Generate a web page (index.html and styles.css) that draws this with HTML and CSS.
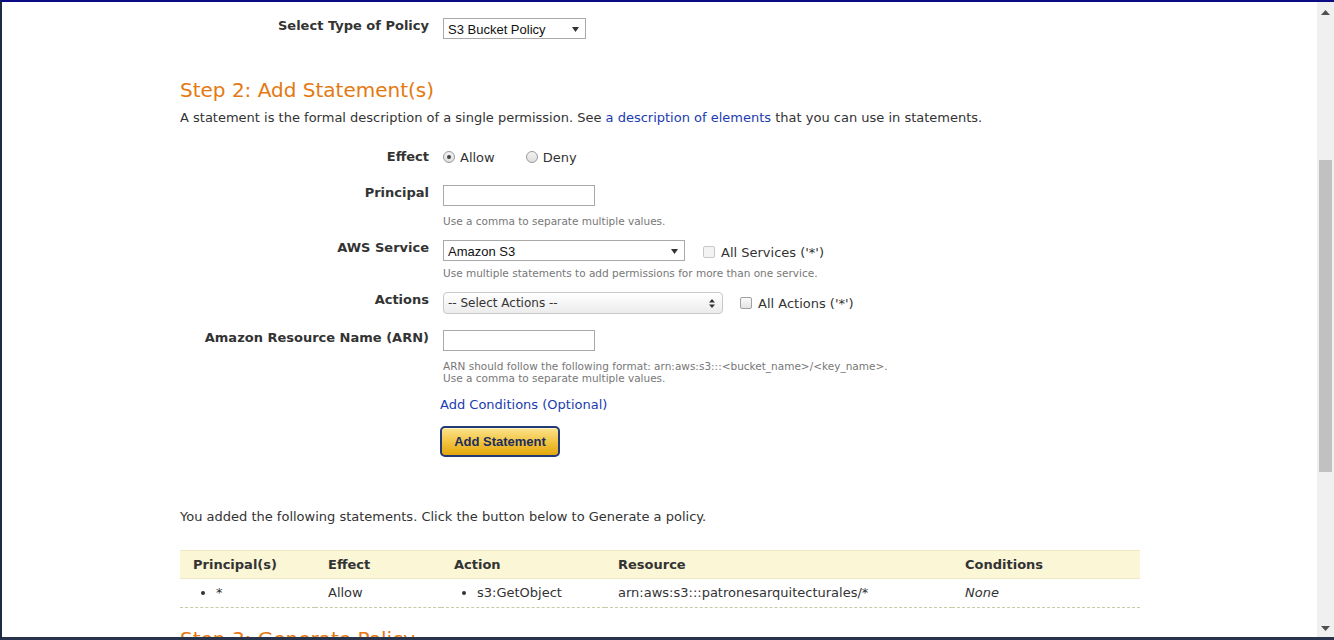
FILE: index.html
```html
<!DOCTYPE html>
<html lang="en">
<head>
<meta charset="utf-8">
<title>AWS Policy Generator</title>
<link rel="stylesheet" href="styles.css">
</head>
<body>
<div class="window">
  <div class="viewport">
    <div class="page">
      <div class="row row-type">
        <div class="label">Select Type of Policy</div>
        <div class="field">
          <div class="select select-type">
            <span>S3 Bucket Policy</span>
            <svg class="arrow" width="7" height="5" viewBox="0 0 7 5"><path d="M0 0H7L3.5 5Z" fill="#333"/></svg>
          </div>
        </div>
      </div>

      <h2 class="step step2">Step 2: Add Statement(s)</h2>
      <p class="intro">A statement is the formal description of a single permission. See <a href="#">a description of elements</a> that you can use in statements.</p>

      <div class="row row-effect">
        <div class="label">Effect</div>
        <div class="field radios">
          <label class="opt"><span class="radio checked"></span>Allow</label>
          <label class="opt opt-deny"><span class="radio"></span>Deny</label>
        </div>
      </div>

      <div class="row row-principal">
        <div class="label">Principal</div>
        <div class="field">
          <div class="input"></div>
          <div class="help help-principal">Use a comma to separate multiple values.</div>
        </div>
      </div>

      <div class="row row-service">
        <div class="label">AWS Service</div>
        <div class="field">
          <div class="inline">
            <div class="select select-service">
              <span>Amazon S3</span>
              <svg class="arrow" width="7" height="5" viewBox="0 0 7 5"><path d="M0 0H7L3.5 5Z" fill="#333"/></svg>
            </div>
            <label class="check check-disabled"><span class="box"></span>All Services ('*')</label>
          </div>
          <div class="help help-service">Use multiple statements to add permissions for more than one service.</div>
        </div>
      </div>

      <div class="row row-actions">
        <div class="label">Actions</div>
        <div class="field">
          <div class="inline">
            <div class="select select-actions">
              <span>-- Select Actions --</span>
              <svg class="arrow" width="6" height="9" viewBox="0 0 6 9"><path d="M0 3.5H6L3 0Z M0 5.5H6L3 9Z" fill="#333"/></svg>
            </div>
            <label class="check check-actions"><span class="box"></span>All Actions ('*')</label>
          </div>
        </div>
      </div>

      <div class="row row-arn">
        <div class="label">Amazon Resource Name (ARN)</div>
        <div class="field">
          <div class="input"></div>
          <div class="help help-arn">ARN should follow the following format: arn:aws:s3:::&lt;bucket_name&gt;/&lt;key_name&gt;.<br>Use a comma to separate multiple values.</div>
          <a class="conditions" href="#">Add Conditions (Optional)</a>
          <div class="btn-wrap"><button class="btn" type="button">Add Statement</button></div>
        </div>
      </div>

      <p class="added">You added the following statements. Click the button below to Generate a policy.</p>

      <table class="statements">
        <thead>
          <tr>
            <th class="c1">Principal(s)</th>
            <th class="c2">Effect</th>
            <th class="c3">Action</th>
            <th class="c4">Resource</th>
            <th class="c5">Conditions</th>
          </tr>
        </thead>
        <tbody>
          <tr>
            <td><ul><li>*</li></ul></td>
            <td>Allow</td>
            <td><ul><li>s3:GetObject</li></ul></td>
            <td>arn:aws:s3:::patronesarquitecturales/*</td>
            <td><em>None</em></td>
          </tr>
        </tbody>
      </table>

      <h2 class="step step3">Step 3: Generate Policy</h2>
    </div>
  </div>
  <div class="scrollbar">
    <svg class="sb-arrow" width="9" height="5" viewBox="0 0 9 5"><path d="M0 5H9L4.5 0Z" fill="#505050"/></svg>
    <div class="sb-track">
      <div class="sb-thumb"></div>
    </div>
    <svg class="sb-arrow" width="9" height="5" viewBox="0 0 9 5"><path d="M0 0H9L4.5 5Z" fill="#505050"/></svg>
  </div>
</div>
</body>
</html>
```

FILE: styles.css
```css
* { box-sizing: border-box; }

html, body {
  margin: 0;
  padding: 0;
  height: 100%;
  overflow: hidden;
  background: #fff;
}

body {
  font-family: "DejaVu Sans", Verdana, sans-serif;
  font-size: 13px;
  color: #333;
}

.window {
  display: flex;
  height: 640px;
  width: 1334px;
  border-top: 2px solid #0b0b86;
  border-left: 2px solid #1f2a45;
  border-bottom: 3px solid #28334c;
}

.viewport {
  flex: 1;
  overflow: hidden;
  background: #fff;
}

.page {
  width: 960px;
  margin-left: 178px;
}

/* form rows */
.row {
  display: grid;
  grid-template-columns: 249px 1fr;
  column-gap: 14px;
  align-items: start;
}

.label {
  text-align: right;
  font-weight: bold;
  line-height: 15px;
  color: #333;
}

.row-type { margin-top: 16px; }
.row-type .label { line-height: 16px; }

.field { min-width: 0; }

.inline {
  display: flex;
  align-items: center;
}

/* fake selects */
.select {
  display: flex;
  align-items: center;
  justify-content: space-between;
  height: 21px;
  border: 1px solid #a9a9a9;
  background: #fff;
  padding: 1px 6px 0 4px;
  font-family: "Liberation Sans", Arial, sans-serif;
  font-size: 13px;
  color: #111;
}

.select-type { width: 143px; }
.select-service { width: 242px; }

.select-actions {
  width: 280px;
  height: 22px;
  border: 1px solid #c8c8c8;
  border-radius: 4px;
  background: linear-gradient(#ffffff, #ececec);
  font-family: "DejaVu Sans", Verdana, sans-serif;
  font-size: 12px;
  color: #333;
  padding: 0 7px 0 4px;
}

.input {
  width: 152px;
  height: 21px;
  border: 1px solid #a9a9a9;
  background: #fff;
}

.help {
  font-size: 10.5px;
  line-height: 12px;
  color: #777;
}

.help-principal { margin-top: 9px; }
.help-service { margin-top: 6px; }
.help-arn { margin-top: 9px; }

/* headings and paragraphs */
.step {
  font-size: 20px;
  font-weight: normal;
  line-height: 24px;
  color: #e47911;
  margin: 0;
}

.step2 { margin-top: 39px; }
.step3 { margin-top: 19px; }

.intro {
  margin: 7px 0 0;
  line-height: 18px;
}

a {
  color: #1a3cb0;
  text-decoration: none;
}

/* effect radios */
.row-effect { margin-top: 21px; }
.row-effect .label { line-height: 18px; }

.radios {
  display: flex;
  align-items: center;
  height: 18px;
}

.opt {
  display: flex;
  align-items: center;
  color: #333;
}

.opt-deny { margin-left: 31px; }

.radio {
  width: 12px;
  height: 12px;
  border-radius: 50%;
  border: 1px solid #9a9a9a;
  background: linear-gradient(#f4f4f4, #dedede);
  margin-right: 5px;
  display: flex;
  align-items: center;
  justify-content: center;
}

.radio.checked::after {
  content: "";
  width: 4px;
  height: 4px;
  border-radius: 50%;
  background: #444;
}

/* checkboxes */
.check {
  display: flex;
  align-items: center;
  margin-left: 18px;
  margin-top: 3px;
  color: #333;
}

.box {
  width: 12px;
  height: 12px;
  border: 1px solid #a0a0a0;
  border-radius: 2px;
  background: linear-gradient(#fafafa, #e4e4e4);
  margin-right: 6px;
}

.check-disabled .box {
  border-color: #c8c8c8;
  background: #f3f3f3;
}

.check-actions { margin-left: 17px; margin-top: 0; }

.row-principal { margin-top: 19px; }
.row-service { margin-top: 13px; }
.row-actions { margin-top: 13px; }
.row-arn { margin-top: 16px; }

.conditions {
  display: block;
  margin: 12px 0 0 -3px;
  line-height: 18px;
  width: max-content;
}

.btn-wrap { margin: 12px 0 0 -3px; }

.btn {
  width: 120px;
  height: 31px;
  border: 2px solid #233a76;
  border-radius: 5px;
  background: linear-gradient(#fde38c, #f1c23d 55%, #e3a70b);
  font-family: "Liberation Sans", Arial, sans-serif;
  font-size: 13px;
  font-weight: bold;
  color: #1c2c5e;
  padding: 0;
  box-shadow: inset 0 1px 0 #fff3c4;
}

.added {
  margin: 51px 0 0;
  line-height: 18px;
}

/* statements table */
.statements {
  margin-top: 24px;
  width: 960px;
  border-collapse: collapse;
  table-layout: fixed;
}

.statements th {
  background: #faf6d6;
  border-top: 1px solid #efe8c2;
  border-bottom: 1px solid #efe8c2;
  text-align: left;
  font-weight: bold;
  height: 28px;
  padding: 0 0 0 13px;
  color: #333;
}

.statements td {
  height: 29px;
  padding: 0 0 1px 13px;
  border-bottom: 1px dashed #c9c9a6;
  color: #333;
}

.c1 { width: 135px; }
.c2 { width: 126px; }
.c3 { width: 164px; }
.c4 { width: 347px; }
.c5 { width: 188px; }

.statements ul {
  margin: 0;
  padding-left: 23px;
}

.statements em { color: #333; }

/* scrollbar */
.scrollbar {
  width: 17px;
  background: #f0f0f0;
  display: flex;
  flex-direction: column;
  align-items: center;
  padding: 8px 0 6px;
}

.sb-track {
  flex: 1;
  width: 100%;
  padding: 145px 2px 0;
}

.sb-thumb {
  width: 13px;
  height: 312px;
  background: #c1c1c1;
}
```
